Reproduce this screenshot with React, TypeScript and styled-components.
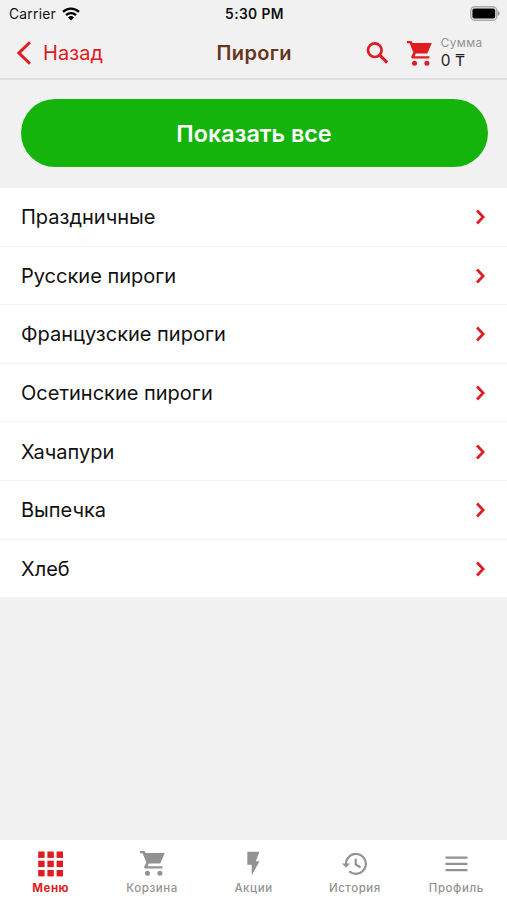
import React from "react";
import styled, { createGlobalStyle } from "styled-components";

const RED = "#e01b22";
const GREY = "#929292";

const Global = createGlobalStyle`
  * { box-sizing: border-box; }
  body { margin: 0; background: #f1f1f1; font-family: Inter, "Liberation Sans", sans-serif; }
  button { font: inherit; border: 0; background: none; padding: 0; margin: 0; }
  svg { display: block; flex: none; }
`;

const Screen = styled.div`
  width: 507px;
  height: 900px;
  display: flex;
  flex-direction: column;
  background: #f1f1f1;
  overflow: hidden;
`;

const StatusBar = styled.div`
  height: 28px;
  flex: none;
  display: grid;
  grid-template-columns: 1fr auto 1fr;
  align-items: center;
  padding: 0 7px 1px 9px;
  color: #111;
  font-size: 13.8px;
`;

const Carrier = styled.div`
  display: flex;
  align-items: center;
  gap: 6px;
  letter-spacing: 0.25px;
`;

const Clock = styled.div`
  font-weight: 600;
  font-size: 13.8px;
  letter-spacing: 0.4px;
`;

const Battery = styled.div`
  justify-self: end;
  padding-bottom: 1px;
`;

const NavBar = styled.header`
  height: 52px;
  flex: none;
  display: grid;
  grid-template-columns: 1fr auto 1fr;
  align-items: center;
  border-bottom: 2px solid #e0e0e0;
  padding: 0 24.5px 0 17px;
`;

const Back = styled.button`
  display: flex;
  align-items: center;
  gap: 12px;
  color: ${RED};
  font-size: 20px;
  line-height: 24px;
  letter-spacing: 0.1px;
`;

const Title = styled.h1`
  margin: 0;
  padding-left: 9px;
  color: #66351f;
  font-size: 20px;
  line-height: 24px;
  font-weight: 600;
  letter-spacing: 0.35px;
`;

const Actions = styled.div`
  justify-self: end;
  display: flex;
  align-items: center;
`;

const CartButton = styled.button`
  display: flex;
  align-items: center;
  margin-left: 19px;
  text-align: left;
  color: ${RED};
`;

const Total = styled.span`
  display: flex;
  flex-direction: column;
  margin-left: 9px;
`;

const TotalLabel = styled.span`
  color: ${GREY};
  font-size: 11.7px;
  line-height: 15px;
  letter-spacing: 0.4px;
`;

const TotalValue = styled.span`
  color: #222;
  font-size: 15.5px;
  line-height: 19px;
`;

const ShowAll = styled.button`
  flex: none;
  height: 68px;
  margin: 19px 19px 21px 21px;
  padding: 0 1px 0 0;
  border-radius: 34px;
  background: #15b40d;
  color: #fff;
  font-size: 23.3px;
  font-weight: 600;
`;

const List = styled.ul`
  list-style: none;
  margin: 0;
  padding: 0;
  flex: none;
`;

const Row = styled.li`
  height: 58.6px;
  display: flex;
  align-items: center;
  justify-content: space-between;
  padding: 0.8px 22px 0 21px;
  background: #fff;
  border-bottom: 1.5px solid #f3f3f3;
  color: #111;
  font-size: 20px;
`;

const Tabs = styled.nav`
  margin-top: auto;
  height: 60px;
  flex: none;
  display: grid;
  grid-template-columns: repeat(5, 1fr);
  background: #fff;
`;

const Tab = styled.button<{ $active?: boolean }>`
  display: flex;
  flex-direction: column;
  align-items: center;
  padding-top: 10px;
  gap: 4px;
  color: ${(p) => (p.$active ? RED : GREY)};
  font-size: 11.5px;
  line-height: 14px;
  font-weight: ${(p) => (p.$active ? 700 : 500)};
  letter-spacing: 0.55px;
`;

const TabIcon = styled.span`
  height: 27px;
  display: flex;
  align-items: center;
`;

const WifiIcon = () => (
  <svg width="18" height="14" viewBox="0 0 18 14" fill="none" stroke="#000" strokeWidth="2.3">
    <path d="M1 4.9a11.5 11.5 0 0 1 16 0" />
    <path d="M4 8.1a7.2 7.2 0 0 1 10 0" />
    <path d="M9 13.4 6 10.5a4.3 4.3 0 0 1 6 0z" fill="#000" stroke="none" />
  </svg>
);

const BatteryIcon = () => (
  <svg width="30" height="15" viewBox="0 0 30 15">
    <rect x="0.8" y="0.8" width="26" height="13.4" rx="4" fill="#f1f1f1" stroke="#aaa" strokeWidth="1.5" />
    <rect x="2.4" y="2.5" width="22.8" height="10" rx="2" fill="#000" />
    <path d="M27.7 5c1.3.5 2 1.3 2 2.5s-.7 2-2 2.5z" fill="#999" />
  </svg>
);

const BackIcon = () => (
  <svg width="14" height="24" viewBox="0 0 14 24" fill="none" stroke={RED} strokeWidth="3">
    <path d="M13 1.2 2 12l11 10.8" />
  </svg>
);

const SearchIcon = () => (
  <svg width="22" height="22" viewBox="0 0 22 22" fill="none" stroke={RED} strokeWidth="2.7">
    <circle cx="8.8" cy="8.2" r="6.8" />
    <path d="m13.8 13.2 7.4 7.4" strokeWidth="3.2" />
  </svg>
);

const CartIcon = () => (
  <svg width="25" height="25" viewBox="0 0 25 25" fill="currentColor">
    <path d="M0 0h4.5l1.2 2H24.8l-4.500 10.600H8.800l-1.300 2.700h14.900v2.200H5.800c-1.500 0-2-1.100-1.400-2.200l1.900-3.700L2.700 2.300H0z" />
    <circle cx="7.500" cy="22.200" r="2.500" />
    <circle cx="19.900" cy="22.200" r="2.500" />
  </svg>
);

const ChevronIcon = () => (
  <svg width="9" height="16" viewBox="0 0 9 16" fill="none" stroke={RED} strokeWidth="2.7">
    <path d="M1 1.500 7.200 8 1 14.500" />
  </svg>
);

const GridIcon = () => (
  <svg width="25" height="26" viewBox="0 0 25 26" fill="currentColor">
    {[0.5, 9.7, 19].map((y) =>
      [0.2, 9.4, 18.6].map((x) => <rect key={`${x}-${y}`} x={x} y={y} width="6.4" height="6.4" />)
    )}
  </svg>
);

const BoltIcon = () => (
  <svg width="25" height="26" viewBox="0 0 25 26" fill="currentColor">
    <path d="M6.300.7h12.200l-3.700 9.500h3.700l-7.800 14.300V13.800H6.300z" />
  </svg>
);

const HistoryIcon = () => (
  <svg width="25" height="26" viewBox="0 0 25 26" fill="none" stroke="currentColor" strokeWidth="2.2">
    <path d="M4 14v-1A9.900 9.900 0 1 1 7.200 20.200" />
    <path d="M0 12.600h8l-4 4.200z" fill="currentColor" stroke="none" />
    <path d="M13.700 7.800v5.700l4.800 2.800" />
  </svg>
);

const MenuIcon = () => (
  <svg width="25" height="26" viewBox="0 0 25 26" stroke="currentColor" strokeWidth="2.2">
    <path d="M1.500 6.700h22M1.500 12.900h22M1.500 19.100h22" />
  </svg>
);

const CATEGORIES = [
  "Праздничные",
  "Русские пироги",
  "Французские пироги",
  "Осетинские пироги",
  "Хачапури",
  "Выпечка",
  "Хлеб",
];

const TABS = [
  { label: "Меню", icon: <GridIcon />, active: true },
  { label: "Корзина", icon: <CartIcon /> },
  { label: "Акции", icon: <BoltIcon /> },
  { label: "История", icon: <HistoryIcon /> },
  { label: "Профиль", icon: <MenuIcon /> },
];

export default function App() {
  return (
    <Screen>
      <Global />
      <StatusBar>
        <Carrier>
          Carrier <WifiIcon />
        </Carrier>
        <Clock>5:30 PM</Clock>
        <Battery>
          <BatteryIcon />
        </Battery>
      </StatusBar>
      <NavBar>
        <Back>
          <BackIcon />
          Назад
        </Back>
        <Title>Пироги</Title>
        <Actions>
          <SearchIcon />
          <CartButton>
            <CartIcon />
            <Total>
              <TotalLabel>Сумма</TotalLabel>
              <TotalValue>0 ₸</TotalValue>
            </Total>
          </CartButton>
        </Actions>
      </NavBar>
      <ShowAll>Показать все</ShowAll>
      <List>
        {CATEGORIES.map((name) => (
          <Row key={name}>
            {name}
            <ChevronIcon />
          </Row>
        ))}
      </List>
      <Tabs>
        {TABS.map((tab) => (
          <Tab key={tab.label} $active={tab.active}>
            <TabIcon>{tab.icon}</TabIcon>
            {tab.label}
          </Tab>
        ))}
      </Tabs>
    </Screen>
  );
}
